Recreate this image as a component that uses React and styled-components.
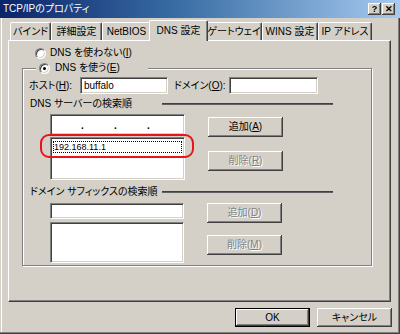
import React from 'react';
import styled, { createGlobalStyle, css } from 'styled-components';

const Global = createGlobalStyle`
  html, body { margin: 0; padding: 0; background: #D4D0C8; }
  body {
    font-family: "Liberation Sans", "Noto Sans CJK JP", sans-serif;
    font-size: 10px;
    color: #000;
    font-feature-settings: "palt";
  }
  * { box-sizing: border-box; }
  u { text-decoration: underline; text-underline-offset: 1px; }
`;

const Window = styled.div`
  width: 400px;
  height: 334px;
  display: flex;
  flex-direction: column;
  background: #D4D0C8;
  overflow: hidden;
`;

const TitleBar = styled.div`
  height: 18px;
  flex: none;
  display: flex;
  align-items: center;
  justify-content: space-between;
  padding: 0 5px 0 3px;
  background: linear-gradient(to right, #0A246A 0%, #3A6EA5 45%, #A6CAF0 100%);
  color: #fff;
  line-height: 12px;
`;

const CaptionButtons = styled.div`
  display: flex;
  gap: 1px;
`;

const CaptionButton = styled.div`
  width: 13px;
  height: 12px;
  display: flex;
  align-items: center;
  justify-content: center;
  background: #D4D0C8;
  color: #000;
  font: bold 9px "Liberation Sans", sans-serif;
  box-shadow: inset -1px -1px 0 #404040, inset 1px 1px 0 #fff, inset -2px -2px 0 #808080;
`;

const Body = styled.div`
  flex: 1;
  display: flex;
  flex-direction: column;
  padding: 2px 7px 0 8px;
  border-bottom: 1px solid #404040;
  border-right: 1px solid #404040;
  box-shadow: inset 0 -1px 0 #808080, inset -1px 0 0 #808080, inset 1px 0 0 #D4D0C8, inset 2px 0 0 #fff;
`;

const TabStrip = styled.div`
  height: 20px;
  display: flex;
  align-items: flex-end;
  padding-left: 2px;
  position: relative;
  z-index: 1;
`;

const Tab = styled.div`
  width: ${p => p.$w}px;
  height: 18px;
  flex: none;
  display: flex;
  align-items: center;
  justify-content: center;
  background: #D4D0C8;
  border-top: 1px solid #fff;
  border-left: 1px solid #fff;
  border-right: 1px solid #404040;
  border-radius: 2px 2px 0 0;
  box-shadow: inset -1px 0 0 #808080;
  white-space: nowrap;
  line-height: 12px;
  padding-top: 1px;
  ${p => p.$active && css`
    height: 21px;
    margin: 0 -2px -1px;
    width: ${p.$w + 4}px;
    padding-bottom: 1px;
    position: relative;
    z-index: 2;
  `}
`;

const Panel = styled.div`
  width: 383px;
  height: 262px;
  flex: none;
  display: flex;
  flex-direction: column;
  border-top: 1px solid #fff;
  border-left: 1px solid #fff;
  border-right: 1px solid #404040;
  border-bottom: 1px solid #404040;
  box-shadow: inset -1px -1px 0 #808080;
`;

const RadioRow = styled.label`
  display: flex;
  align-items: center;
  gap: ${p => p.$gap || 4}px;
  height: 12px;
  line-height: 12px;
  white-space: nowrap;
  ${p => p.$standalone && css`
    margin: 6px 0 0 26px;
  `}
`;

const RadioCircle = styled.span`
  width: 11px;
  height: 11px;
  flex: none;
  border-radius: 50%;
  background: #fff;
  border: 1px solid;
  border-color: #808080 #fff #fff #808080;
  box-shadow: inset 1px 1px 0 #404040, inset -1px -1px 0 #D4D0C8;
  display: flex;
  align-items: center;
  justify-content: center;
  &::after {
    content: '';
    width: 3px;
    height: 3px;
    border-radius: 50%;
    background: #000;
    display: ${p => (p.$checked ? 'block' : 'none')};
  }
`;

const GroupBox = styled.fieldset`
  margin: 3px 0 0 13px;
  padding: 0 0 2px 6px;
  width: 350px;
  min-width: 0;
  align-self: flex-start;
  border: 1px solid #808080;
  box-shadow: inset 1px 1px 0 #fff, 1px 1px 0 #fff;
`;

const Legend = styled.legend`
  margin-left: 7px;
  padding: 0 28px 0 3px;
  height: 12px;
  background: #D4D0C8;
`;

const HostRow = styled.div`
  margin-top: 3px;
  display: grid;
  grid-template-columns: 51px 88px 61px 89px;
  align-items: center;
  height: 17px;
  line-height: 12px;
  white-space: nowrap;
`;

const Label = styled.span`
  padding-left: ${p => p.$indent || 0}px;
`;

const Field = styled.div`
  height: ${p => p.$h}px;
  background: #fff;
  border: 1px solid;
  border-color: #808080 #fff #fff #808080;
  box-shadow: inset 1px 1px 0 #404040, inset -1px -1px 0 #D4D0C8;
  display: flex;
  align-items: center;
  padding: 0 3px;
  line-height: 12px;
`;

const SectionHeader = styled.div`
  margin-top: ${p => p.$mt}px;
  height: 12px;
  line-height: 12px;
  display: grid;
  grid-template-columns: 132px 171px;
  align-items: center;
  padding-left: 1px;
  white-space: nowrap;
`;

const Rule = styled.div`
  height: 2px;
  border-top: 1px solid #404040;
  border-bottom: 1px solid #606060;
`;

const ListArea = styled.div`
  margin-top: ${p => p.$mt}px;
  padding-left: 21px;
  display: flex;
  gap: 23px;
`;

const ListColumn = styled.div`
  width: ${p => p.$w}px;
  display: flex;
  flex-direction: column;
  gap: ${p => p.$gap}px;
  position: relative;
`;

const IpBox = styled(Field)`
  display: grid;
  grid-template-columns: 1fr 3px 1fr 3px 1fr 3px 1fr;
  padding: 0 4px 0 0;
  font-weight: bold;
`;

const IpDot = styled.span`
  text-align: center;
  line-height: 12px;
  margin-top: 2px;
`;

const ListBox = styled(Field)`
  align-items: flex-start;
  padding: 3px 2px 2px 2px;
`;

const ListItem = styled.div`
  width: 100%;
  height: 12px;
  line-height: 10px;
  font-size: 9px;
  border: 1px dotted #000;
`;

const Highlight = styled.div`
  position: absolute;
  left: -10px;
  top: 20px;
  width: 154px;
  height: 24px;
  border: 2.5px solid #E8141C;
  border-radius: 9px;
  pointer-events: none;
`;

const ButtonColumn = styled.div`
  display: flex;
  flex-direction: column;
  padding-top: ${p => p.$pt}px;
  gap: ${p => p.$gap}px;
`;

const Button = styled.button`
  width: 75px;
  height: ${p => p.$h || 20}px;
  margin: 0;
  padding: 0;
  font: inherit;
  line-height: 12px;
  background: #D4D0C8;
  color: ${p => (p.$off ? '#808080' : '#000')};
  text-shadow: ${p => (p.$off ? '1px 1px 0 #fff' : 'none')};
  border: none;
  box-shadow: inset -1px -1px 0 #404040, inset 1px 1px 0 #fff, inset -2px -2px 0 #808080;
  ${p => p.$default && css`
    border: 1px solid #000;
  `}
`;

const Footer = styled.div`
  margin-top: 6px;
  display: flex;
  justify-content: flex-end;
  gap: 7px;
`;

const tabs = [
  { label: 'バインド', w: 41 },
  { label: '詳細設定', w: 51 },
  { label: 'NetBIOS', w: 49 },
  { label: 'DNS 設定', w: 55, active: true },
  { label: 'ゲートウェイ', w: 56 },
  { label: 'WINS 設定', w: 56 },
  { label: 'IP アドレス', w: 54 },
];

export default function App() {
  return (
    <>
      <Global />
      <Window>
        <TitleBar>
          <span>TCP/IPのプロパティ</span>
          <CaptionButtons>
            <CaptionButton>?</CaptionButton>
            <CaptionButton>✕</CaptionButton>
          </CaptionButtons>
        </TitleBar>
        <Body>
          <TabStrip>
            {tabs.map(t => (
              <Tab key={t.label} $w={t.w} $active={t.active}>{t.label}</Tab>
            ))}
          </TabStrip>
          <Panel>
            <RadioRow $standalone>
              <RadioCircle />
              <span>DNS を使わない(<u>I</u>)</span>
            </RadioRow>
            <GroupBox>
              <Legend>
                <RadioRow $gap={5}>
                  <RadioCircle $checked />
                  <span>DNS を使う(<u>E</u>)</span>
                </RadioRow>
              </Legend>
              <HostRow>
                <Label>ホスト(<u>H</u>):</Label>
                <Field $h={17}>buffalo</Field>
                <Label $indent={6}>ドメイン(<u>O</u>):</Label>
                <Field $h={17} />
              </HostRow>
              <SectionHeader $mt={4}>
                <span>DNS サーバーの検索順</span>
                <Rule />
              </SectionHeader>
              <ListArea $mt={4}>
                <ListColumn $w={135} $gap={2}>
                  <IpBox $h={21}>
                    <span />
                    <IpDot>.</IpDot>
                    <span />
                    <IpDot>.</IpDot>
                    <span />
                    <IpDot>.</IpDot>
                    <span />
                  </IpBox>
                  <ListBox $h={43}>
                    <ListItem>192.168.11.1</ListItem>
                  </ListBox>
                  <Highlight />
                </ListColumn>
                <ButtonColumn $pt={3} $gap={14}>
                  <Button>追加(<u>A</u>)</Button>
                  <Button $off disabled>削除(<u>R</u>)</Button>
                </ButtonColumn>
              </ListArea>
              <SectionHeader $mt={6}>
                <span>ドメイン サフィックスの検索順</span>
                <Rule />
              </SectionHeader>
              <ListArea $mt={5}>
                <ListColumn $w={134} $gap={3}>
                  <Field $h={16} />
                  <ListBox $h={41} />
                </ListColumn>
                <ButtonColumn $pt={0} $gap={12}>
                  <Button $off disabled>追加(<u>D</u>)</Button>
                  <Button $off disabled>削除(<u>M</u>)</Button>
                </ButtonColumn>
              </ListArea>
            </GroupBox>
          </Panel>
          <Footer>
            <Button $default $h={19}>OK</Button>
            <Button $h={19}>キャンセル</Button>
          </Footer>
        </Body>
      </Window>
    </>
  );
}
